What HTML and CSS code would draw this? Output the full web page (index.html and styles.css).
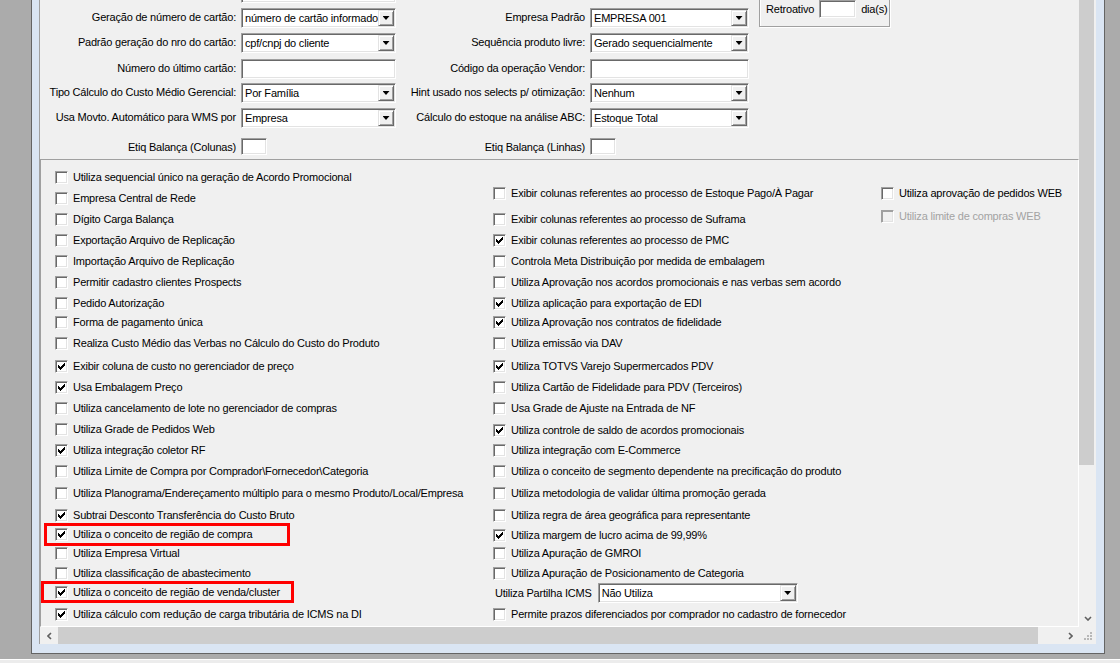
FILE: index.html
```html
<!DOCTYPE html>
<html lang="pt-BR">
<head>
  <meta charset="UTF-8">
  <title>Parâmetros da Empresa</title>
  <link rel="stylesheet" href="styles.css">
</head>
<body>
  <div class="window">
    <div class="client">
      <div class="view">

        <!-- campos do topo -->
        <div class="fields">
          <div class="form-col a">
            <span class="lbl"></span>
            <span class="edit"></span>

            <span class="lbl">Geração de número de cartão:</span>
            <span class="combo"><span class="val">número de cartão informado</span><span class="drop"></span></span>

            <span class="lbl">Padrão geração do nro do cartão:</span>
            <span class="combo"><span class="val">cpf/cnpj do cliente</span><span class="drop"></span></span>

            <span class="lbl">Número do último cartão:</span>
            <span class="edit"></span>

            <span class="lbl">Tipo Cálculo do Custo Médio Gerencial:</span>
            <span class="combo"><span class="val">Por Família</span><span class="drop"></span></span>

            <span class="lbl">Usa Movto. Automático para WMS por</span>
            <span class="combo"><span class="val">Empresa</span><span class="drop"></span></span>

            <span class="lbl">Etiq Balança (Colunas)</span>
            <span class="edit small"></span>
          </div>

          <div class="form-col b">
            <span class="lbl"></span>
            <span></span>

            <span class="lbl">Empresa Padrão</span>
            <span class="combo"><span class="val">EMPRESA 001</span><span class="drop"></span></span>

            <span class="lbl">Sequência produto livre:</span>
            <span class="combo"><span class="val">Gerado sequencialmente</span><span class="drop"></span></span>

            <span class="lbl">Código da operação Vendor:</span>
            <span class="edit"></span>

            <span class="lbl">Hint usado nos selects p/ otimização:</span>
            <span class="combo"><span class="val">Nenhum</span><span class="drop"></span></span>

            <span class="lbl">Cálculo do estoque na análise ABC:</span>
            <span class="combo"><span class="val">Estoque Total</span><span class="drop"></span></span>

            <span class="lbl">Etiq Balança (Linhas)</span>
            <span class="edit small"></span>
          </div>

          <div class="group">
            <span>Retroativo</span>
            <span class="edit days"></span>
            <span>dia(s)</span>
          </div>
        </div>

        <!-- parametros (checkboxes) -->
        <div class="opts">
          <div class="opt-col left">
            <label class="opt"><span class="cb"></span>Utiliza sequencial único na geração de Acordo Promocional</label>
            <label class="opt"><span class="cb"></span>Empresa Central de Rede</label>
            <label class="opt"><span class="cb"></span>Dígito Carga Balança</label>
            <label class="opt"><span class="cb"></span>Exportação Arquivo de Replicação</label>
            <label class="opt"><span class="cb"></span>Importação Arquivo de Replicação</label>
            <label class="opt"><span class="cb"></span>Permitir cadastro clientes Prospects</label>
            <label class="opt h19"><span class="cb"></span>Pedido Autorização</label>
            <label class="opt"><span class="cb"></span>Forma de pagamento única</label>
            <label class="opt h23"><span class="cb"></span>Realiza Custo Médio das Verbas no Cálculo do Custo do Produto</label>
            <label class="opt"><span class="cb"><svg viewBox="0 0 11 11"><polygon points="2,4 3,4 3,5 4,5 4,6 5,6 5,5 6,5 6,4 7,4 7,3 8,3 8,2 9,2 9,5 8,5 8,6 7,6 7,7 6,7 6,8 5,8 5,9 4,9 4,8 3,8 3,7 2,7"/></svg></span>Exibir coluna de custo no gerenciador de preço</label>
            <label class="opt"><span class="cb"><svg viewBox="0 0 11 11"><polygon points="2,4 3,4 3,5 4,5 4,6 5,6 5,5 6,5 6,4 7,4 7,3 8,3 8,2 9,2 9,5 8,5 8,6 7,6 7,7 6,7 6,8 5,8 5,9 4,9 4,8 3,8 3,7 2,7"/></svg></span>Usa Embalagem Preço</label>
            <label class="opt"><span class="cb"></span>Utiliza cancelamento de lote no gerenciador de compras</label>
            <label class="opt"><span class="cb"></span>Utiliza Grade de Pedidos Web</label>
            <label class="opt"><span class="cb"><svg viewBox="0 0 11 11"><polygon points="2,4 3,4 3,5 4,5 4,6 5,6 5,5 6,5 6,4 7,4 7,3 8,3 8,2 9,2 9,5 8,5 8,6 7,6 7,7 6,7 6,8 5,8 5,9 4,9 4,8 3,8 3,7 2,7"/></svg></span>Utiliza integração coletor RF</label>
            <label class="opt h22"><span class="cb"></span>Utiliza Limite de Compra por Comprador\Fornecedor\Categoria</label>
            <label class="opt h22"><span class="cb"></span>Utiliza Planograma/Endereçamento múltiplo para o mesmo Produto/Local/Empresa</label>
            <label class="opt h19"><span class="cb"><svg viewBox="0 0 11 11"><polygon points="2,4 3,4 3,5 4,5 4,6 5,6 5,5 6,5 6,4 7,4 7,3 8,3 8,2 9,2 9,5 8,5 8,6 7,6 7,7 6,7 6,8 5,8 5,9 4,9 4,8 3,8 3,7 2,7"/></svg></span>Subtrai Desconto Transferência do Custo Bruto</label>
            <label class="opt h19 mark"><span class="cb"><svg viewBox="0 0 11 11"><polygon points="2,4 3,4 3,5 4,5 4,6 5,6 5,5 6,5 6,4 7,4 7,3 8,3 8,2 9,2 9,5 8,5 8,6 7,6 7,7 6,7 6,8 5,8 5,9 4,9 4,8 3,8 3,7 2,7"/></svg></span>Utiliza o conceito de região de compra</label>
            <label class="opt h20"><span class="cb"></span>Utiliza Empresa Virtual</label>
            <label class="opt h19"><span class="cb"></span>Utiliza classificação de abastecimento</label>
            <label class="opt h22 mark wide"><span class="cb"><svg viewBox="0 0 11 11"><polygon points="2,4 3,4 3,5 4,5 4,6 5,6 5,5 6,5 6,4 7,4 7,3 8,3 8,2 9,2 9,5 8,5 8,6 7,6 7,7 6,7 6,8 5,8 5,9 4,9 4,8 3,8 3,7 2,7"/></svg></span>Utiliza o conceito de região de venda/cluster</label>
            <label class="opt"><span class="cb"><svg viewBox="0 0 11 11"><polygon points="2,4 3,4 3,5 4,5 4,6 5,6 5,5 6,5 6,4 7,4 7,3 8,3 8,2 9,2 9,5 8,5 8,6 7,6 7,7 6,7 6,8 5,8 5,9 4,9 4,8 3,8 3,7 2,7"/></svg></span>Utiliza cálculo com redução de carga tributária de ICMS na DI</label>
          </div>

          <div class="opt-col mid">
            <label class="opt h26"><span class="cb"></span>Exibir colunas referentes ao processo de Estoque Pago/À Pagar</label>
            <label class="opt"><span class="cb"></span>Exibir colunas referentes ao processo de Suframa</label>
            <label class="opt"><span class="cb"><svg viewBox="0 0 11 11"><polygon points="2,4 3,4 3,5 4,5 4,6 5,6 5,5 6,5 6,4 7,4 7,3 8,3 8,2 9,2 9,5 8,5 8,6 7,6 7,7 6,7 6,8 5,8 5,9 4,9 4,8 3,8 3,7 2,7"/></svg></span>Exibir colunas referentes ao processo de PMC</label>
            <label class="opt"><span class="cb"></span>Controla Meta Distribuição por medida de embalagem</label>
            <label class="opt"><span class="cb"></span>Utiliza Aprovação nos acordos promocionais e nas verbas sem acordo</label>
            <label class="opt h19"><span class="cb"><svg viewBox="0 0 11 11"><polygon points="2,4 3,4 3,5 4,5 4,6 5,6 5,5 6,5 6,4 7,4 7,3 8,3 8,2 9,2 9,5 8,5 8,6 7,6 7,7 6,7 6,8 5,8 5,9 4,9 4,8 3,8 3,7 2,7"/></svg></span>Utiliza aplicação para exportação de EDI</label>
            <label class="opt"><span class="cb"><svg viewBox="0 0 11 11"><polygon points="2,4 3,4 3,5 4,5 4,6 5,6 5,5 6,5 6,4 7,4 7,3 8,3 8,2 9,2 9,5 8,5 8,6 7,6 7,7 6,7 6,8 5,8 5,9 4,9 4,8 3,8 3,7 2,7"/></svg></span>Utiliza Aprovação nos contratos de fidelidade</label>
            <label class="opt h23"><span class="cb"></span>Utiliza emissão via DAV</label>
            <label class="opt"><span class="cb"><svg viewBox="0 0 11 11"><polygon points="2,4 3,4 3,5 4,5 4,6 5,6 5,5 6,5 6,4 7,4 7,3 8,3 8,2 9,2 9,5 8,5 8,6 7,6 7,7 6,7 6,8 5,8 5,9 4,9 4,8 3,8 3,7 2,7"/></svg></span>Utiliza TOTVS Varejo Supermercados PDV</label>
            <label class="opt"><span class="cb"></span>Utiliza Cartão de Fidelidade para PDV (Terceiros)</label>
            <label class="opt h22"><span class="cb"></span>Usa Grade de Ajuste na Entrada de NF</label>
            <label class="opt h20"><span class="cb"><svg viewBox="0 0 11 11"><polygon points="2,4 3,4 3,5 4,5 4,6 5,6 5,5 6,5 6,4 7,4 7,3 8,3 8,2 9,2 9,5 8,5 8,6 7,6 7,7 6,7 6,8 5,8 5,9 4,9 4,8 3,8 3,7 2,7"/></svg></span>Utiliza controle de saldo de acordos promocionais</label>
            <label class="opt"><span class="cb"></span>Utiliza integração com E-Commerce</label>
            <label class="opt h22"><span class="cb"></span>Utiliza o conceito de segmento dependente na precificação do produto</label>
            <label class="opt h22"><span class="cb"></span>Utiliza metodologia de validar última promoção gerada</label>
            <label class="opt h20"><span class="cb"></span>Utiliza regra de área geográfica para representante</label>
            <label class="opt h18"><span class="cb"><svg viewBox="0 0 11 11"><polygon points="2,4 3,4 3,5 4,5 4,6 5,6 5,5 6,5 6,4 7,4 7,3 8,3 8,2 9,2 9,5 8,5 8,6 7,6 7,7 6,7 6,8 5,8 5,9 4,9 4,8 3,8 3,7 2,7"/></svg></span>Utiliza margem de lucro acima de 99,99%</label>
            <label class="opt h20"><span class="cb"></span>Utiliza Apuração de GMROI</label>
            <label class="opt h20"><span class="cb"></span>Utiliza Apuração de Posicionamento de Categoria</label>
            <div class="opt field">
              <span>Utiliza Partilha ICMS</span>
              <span class="combo partilha"><span class="val">Não Utiliza</span><span class="drop"></span></span>
            </div>
            <label class="opt"><span class="cb"></span>Permite prazos diferenciados por comprador no cadastro de fornecedor</label>
          </div>

          <div class="opt-col right">
            <label class="opt h23"><span class="cb"></span>Utiliza aprovação de pedidos WEB</label>
            <label class="opt off"><span class="cb"></span>Utiliza limite de compras WEB</label>
          </div>
        </div>
      </div>

      <div class="vscroll">
        <div class="thumb"></div>
        <div class="btn">
          <svg width="8" height="5" viewBox="0 0 8 5"><path d="M1 1l3 3 3-3" fill="none" stroke="#606060" stroke-width="1.6"/></svg>
        </div>
      </div>

      <div class="hscroll">
        <div class="btn first">
          <svg width="5" height="8" viewBox="0 0 5 8"><path d="M4 1L1 4l3 3" fill="none" stroke="#606060" stroke-width="1.6"/></svg>
        </div>
        <div class="thumb"></div>
        <div class="track"></div>
        <div class="btn">
          <svg width="5" height="8" viewBox="0 0 5 8"><path d="M1 1l3 3-3 3" fill="none" stroke="#606060" stroke-width="1.6"/></svg>
        </div>
      </div>

      <div class="corner">
        <svg width="12" height="12" viewBox="0 0 12 12" fill="#b8b8b8">
          <rect x="8" y="2" width="2" height="2"/>
          <rect x="5" y="5" width="2" height="2"/><rect x="8" y="5" width="2" height="2"/>
          <rect x="2" y="8" width="2" height="2"/><rect x="5" y="8" width="2" height="2"/><rect x="8" y="8" width="2" height="2"/>
        </svg>
      </div>
    </div>
  </div>
  <div class="shelf"></div>
</body>
</html>
```

FILE: styles.css
```css
*,
*::before,
*::after {
  box-sizing: border-box;
}

body {
  margin: 0;
  height: 663px;
  overflow: hidden;
  background: #ababab;
  font-family: "Liberation Sans", Arial, sans-serif;
  font-size: 11px;
  letter-spacing: -0.2px;
  color: #000;
}

/* janela (moldura azul clara) */
.window {
  width: 1074px;
  height: 654px;
  margin-left: 31px;
  padding: 0 8px 9px 7px;
  background: #dae5f3;
  border: 1px solid #646464;
  border-top: none;
}

.client {
  display: grid;
  grid-template-columns: 1039px 17px;
  grid-template-rows: 627px 17px;
  border-left: 1px solid #a0a0a0;
}

.view {
  overflow: hidden;
  background: #f0f0f0;
}

/* ---- campos do topo ---- */
.fields {
  display: flex;
  align-items: flex-start;
  height: 176px;
  margin-top: -17px;
}

.form-col {
  display: grid;
  grid-template-rows: 25px 25px 26px 24px 25px 30px 21px;
  column-gap: 5px;
  align-items: start;
}

.form-col.a {
  grid-template-columns: 196px 155px;
}

.form-col.b {
  grid-template-columns: 184px 159px;
  margin-left: 5px;
}

.lbl {
  text-align: right;
  line-height: 18px;
  white-space: nowrap;
}

.edit,
.combo {
  display: flex;
  align-items: center;
  height: 20px;
  background: #fff;
  border: 1px solid;
  border-color: #a0a0a0 #fff #fff #a0a0a0;
  box-shadow: inset 1px 1px #696969, inset -1px -1px #e3e3e3;
}

.edit.small {
  width: 26px;
  height: 17px;
}

.edit.days {
  width: 37px;
  height: 18px;
}

.combo {
  padding-left: 3px;
  line-height: 16px;
  white-space: nowrap;
}

.combo .val {
  flex: 1;
  overflow: hidden;
}

.drop {
  display: flex;
  align-items: center;
  justify-content: center;
  flex: none;
  width: 16px;
  height: 16px;
  margin-right: 1px;
  background: #f0f0f0;
  border: 1px solid;
  border-color: #e3e3e3 #696969 #696969 #e3e3e3;
  box-shadow: inset 1px 1px #fff, inset -1px -1px #a0a0a0;
}

.drop::before {
  content: "";
  width: 7px;
  height: 4px;
  background: #000;
  clip-path: polygon(0 0, 100% 0, 50% 100%);
}

.group {
  display: flex;
  align-items: flex-end;
  gap: 5px;
  width: 131px;
  height: 44px;
  margin-left: 10px;
  padding: 0 0 8px 6px;
  border: 1px solid #a0a0a0;
  box-shadow: inset 1px 1px #fff, 1px 1px #fff;
  line-height: 18px;
}

/* ---- painel de parametros ---- */
.opts {
  display: flex;
  height: 468px;
  padding: 7px 0 0 14px;
  border: 1px solid;
  border-color: #a0a0a0 #fff #fff #a0a0a0;
}

.opt-col {
  display: flex;
  flex-direction: column;
}

.opt-col.left {
  width: 438px;
}

.opt-col.mid {
  width: 388px;
  margin-top: 16px;
}

.opt-col.right {
  margin-top: 16px;
}

.opt {
  position: relative;
  display: flex;
  align-items: flex-start;
  height: 21px;
  line-height: 20px;
  white-space: nowrap;
}

.opt.h18 { height: 18px; }
.opt.h19 { height: 19px; }
.opt.h20 { height: 20px; }
.opt.h22 { height: 22px; }
.opt.h23 { height: 23px; }
.opt.h26 { height: 26px; }

.opt.off {
  color: #a3a3a3;
}

.cb {
  flex: none;
  width: 13px;
  height: 13px;
  margin: 4px 5px 0 0;
  background: #fff;
  border: 1px solid;
  border-color: #a0a0a0 #fff #fff #a0a0a0;
  box-shadow: inset 1px 1px #696969, inset -1px -1px #e3e3e3;
}

.cb svg {
  display: block;
  width: 11px;
  height: 11px;
  shape-rendering: crispEdges;
}

.opt.off .cb {
  background: #f0f0f0;
  box-shadow: inset 1px 1px #a0a0a0, inset -1px -1px #e3e3e3;
}

.opt.field {
  gap: 6px;
  padding-left: 2px;
}

.combo.partilha {
  width: 200px;
}

/* destaque vermelho */
.opt.mark::after {
  content: "";
  position: absolute;
  left: -11px;
  top: -1px;
  width: 246px;
  height: 23px;
  border: 3px solid #f00;
}

.opt.mark.wide::after {
  left: -14px;
  width: 253px;
  height: 22px;
}

/* ---- barras de rolagem ---- */
.vscroll {
  display: flex;
  flex-direction: column;
  background: #f0f0f0;
}

.vscroll .thumb {
  width: 15px;
  height: 465px;
  background: #cdcdcd;
}

.vscroll .btn {
  display: flex;
  align-items: center;
  justify-content: center;
  height: 17px;
  margin-top: auto;
}

.hscroll {
  display: flex;
  background: #f0f0f0;
}

.hscroll .btn {
  display: flex;
  align-items: center;
  justify-content: center;
  width: 17px;
}

.hscroll .btn.first {
  width: 18px;
}

.hscroll .thumb {
  width: 980px;
  background: #cdcdcd;
}

.hscroll .track {
  flex: 1;
}

.corner {
  display: flex;
  align-items: flex-end;
  justify-content: flex-end;
  padding: 0 2px 2px 0;
  background: #f0f0f0;
}

.corner svg {
  display: block;
}

.shelf {
  height: 4px;
  margin-top: 5px;
  background: #ececec;
  border-top: 1px solid #fff;
}
```
